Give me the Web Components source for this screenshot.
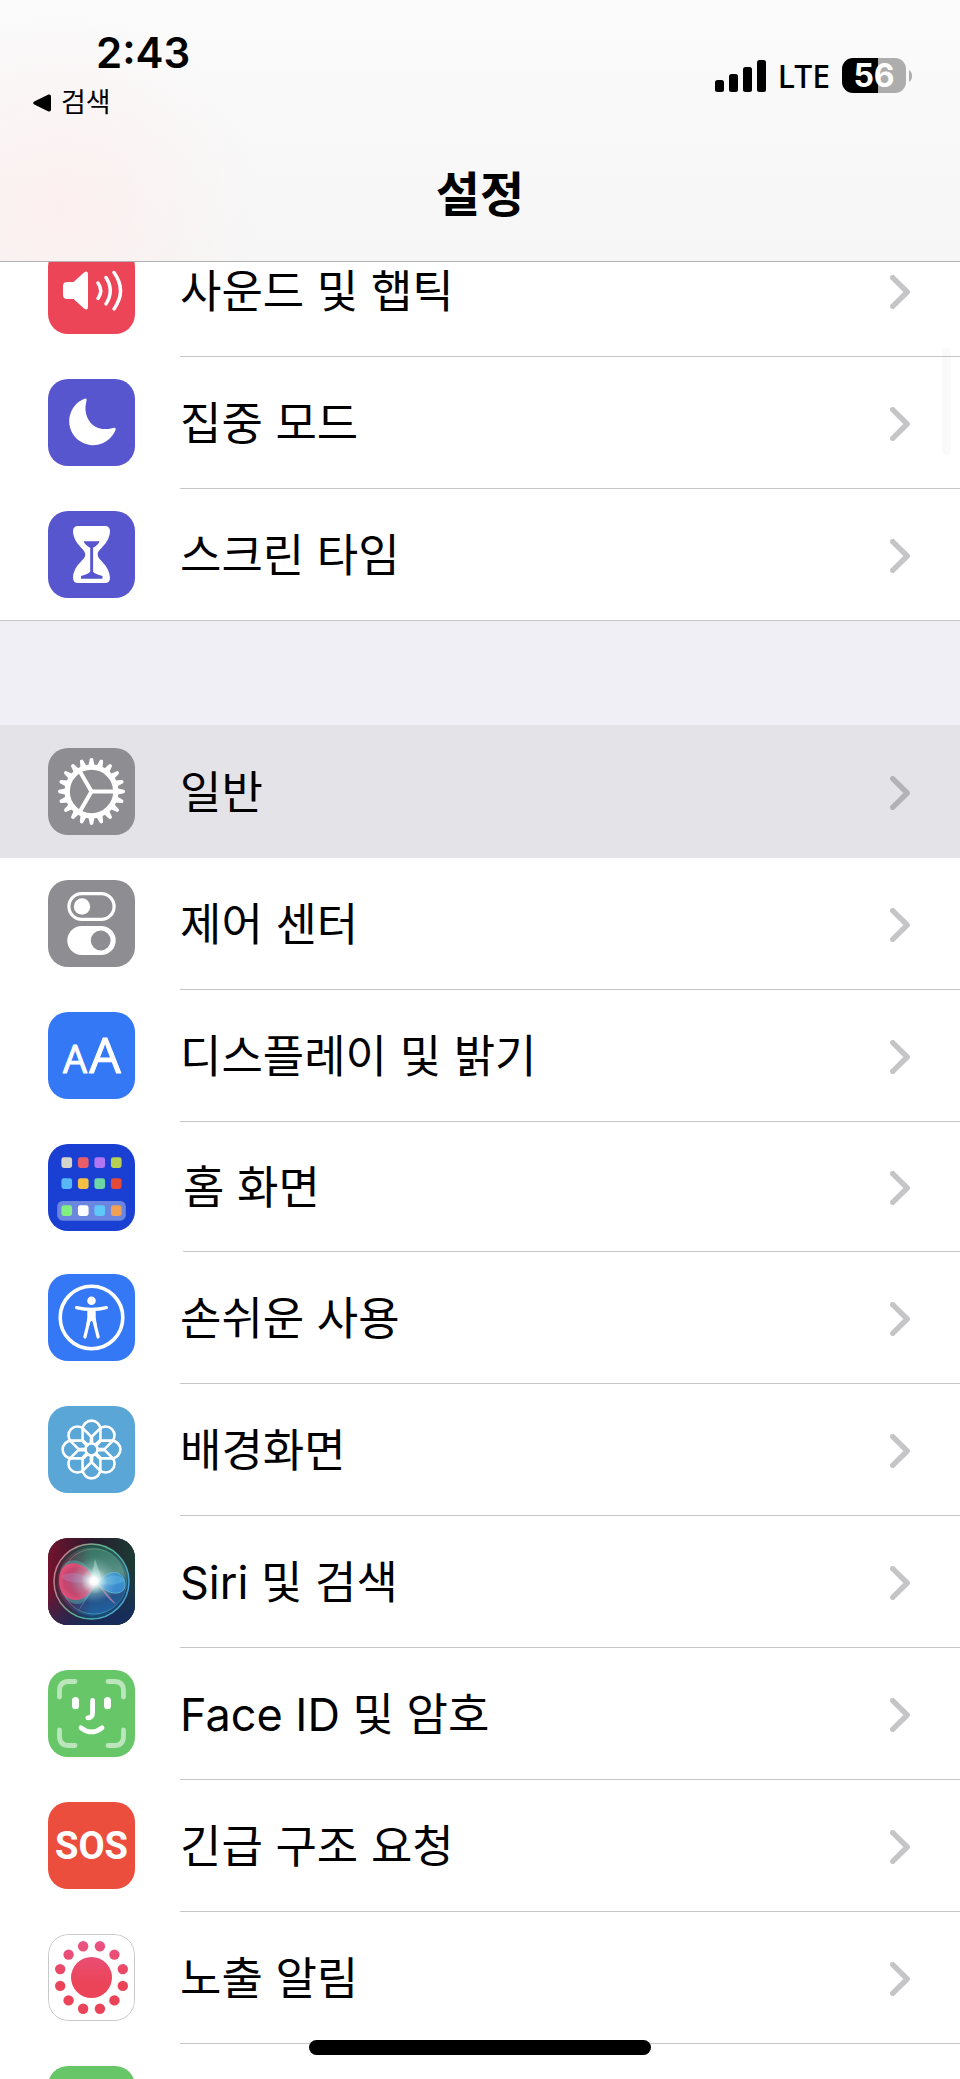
<!DOCTYPE html>
<html lang="ko">
<head>
<meta charset="utf-8">
<meta name="viewport" content="width=device-width, initial-scale=1">
<title>설정</title>
<style>
	body {
		margin: 0;
		color: #000;
		background: #fff;
		font-family: Inter, "Noto Sans CJK KR", sans-serif;
	}
</style>
</head>
<body>

<settings-app>
	<status-bar slot="header" time="2:43" network="LTE" battery="56">검색</status-bar>
	<title-bar slot="header">설정</title-bar>

	<settings-group>
		<settings-row icon="sound">사운드 및 햅틱</settings-row>
		<settings-row icon="moon">집중 모드</settings-row>
		<settings-row icon="hourglass">스크린 타임</settings-row>
	</settings-group>

	<settings-group>
		<settings-row icon="gear" active>일반</settings-row>
		<settings-row icon="toggles">제어 센터</settings-row>
		<settings-row icon="display">디스플레이 및 밝기</settings-row>
		<settings-row icon="home" compact>홈 화면</settings-row>
		<settings-row icon="accessibility">손쉬운 사용</settings-row>
		<settings-row icon="wallpaper">배경화면</settings-row>
		<settings-row icon="siri">Siri 및 검색</settings-row>
		<settings-row icon="face">Face ID 및 암호</settings-row>
		<settings-row icon="sos">긴급 구조 요청</settings-row>
		<settings-row icon="exposure">노출 알림</settings-row>
		<settings-row icon="battery"></settings-row>
	</settings-group>
</settings-app>

<script>
// n copies of a shape, turned around the middle of the icon
const spin = (n, shape) =>
	Array.from({ length: n }, (_, i) =>
		`<g transform="rotate(${(i * 360) / n} 43.5 43.5)">${shape}</g>`
	).join("");

const tiles = (y, colors) =>
	colors
		.map((c, i) => `<rect x="${13.4 + i * 16.5}" y="${y}" width="10.7" height="10.7" rx="2.4" fill="${c}"/>`)
		.join("");

const dots = () =>
	Array.from({ length: 12 }, (_, i) => {
		const a = ((i * 30 + 15) * Math.PI) / 180;
		const x = (43.5 + Math.cos(a) * 32.4).toFixed(2);
		const y = (43.5 + Math.sin(a) * 32.4).toFixed(2);
		return `<circle cx="${x}" cy="${y}" r="5.2"/>`;
	}).join("");

const ICONS = {
	sound: {
		color: "#ec4558",
		art: `
			<path fill="#fff" d="M19 35h6.5L36 25.5q4-2.5 4 2v32q0 4.5-4 2L25.5 52H19q-4 0-4-4v-9q0-4 4-4z"/>
			<g fill="none" stroke="#fff" stroke-width="3.5" stroke-linecap="round">
				<path d="M50 36q5.5 7.7 0 15.4"/>
				<path d="M58 30.5q8.5 13.2 0 26.4"/>
				<path d="M66 25.5q13 18.2 0 36.4"/>
			</g>`,
	},
	moon: {
		color: "#5856ce",
		art: `<path fill="#fff" d="M36.5 19.8Q39.3 18.8 38.5 22C34 38 45 54 64 49.2Q69 47.8 67.3 51.5A24 24 0 1 1 36.5 19.8z"/>`,
	},
	hourglass: {
		color: "#5856ce",
		art: `
			<path fill="#fff" d="M30 15h27q5 0 5 5.5C61 34 49.7 37.5 49.7 43.5S61 53 62 66.5q0 5.5-5 5.5H30q-5 0-5-5.5C26 53 37.3 49.5 37.3 43.5S26 34 25 20.5Q25 15 30 15z"/>
			<path fill="#5856ce" d="M35.7 30.2h15.8q-.7 3.3-6.4 6.5v24q2 2.3 9.4 4.3v2.7H33V65q7.2-2 9.2-4.3v-24q-5.8-3.2-6.5-6.5z"/>`,
	},
	gear: {
		color: "#8e8d92",
		art: `
			<g fill="#fff">${spin(20, `<path d="M69 40.3l6.8 1.5q1.2.3 1.2 1.7t-1.2 1.7L69 46.7z"/>`)}</g>
			<circle cx="43.5" cy="43.5" r="24.3" fill="none" stroke="#fff" stroke-width="5.3"/>
			<g fill="none" stroke="#fff" stroke-width="4">${spin(3, `<path d="M43.5 43.5H67"/>`)}</g>`,
	},
	toggles: {
		color: "#8e8d92",
		art: `
			<rect x="20.9" y="13.6" width="45.2" height="25.8" rx="12.9" fill="none" stroke="#fff" stroke-width="3.2"/>
			<circle cx="34" cy="26.5" r="8.2" fill="#fff"/>
			<rect x="19.3" y="46" width="48.4" height="29" rx="14.5" fill="#fff"/>
			<circle cx="52.7" cy="60.5" r="9.9" fill="#8e8d92"/>`,
	},
	display: {
		color: "#3478f6",
		art: `
			<g fill="#fff" text-anchor="middle" font-family="'Open Sans', sans-serif" font-weight="500" stroke="#fff" stroke-linejoin="round">
				<text x="27" y="61" font-size="38">A</text>
				<text x="57" y="61" font-size="50">A</text>
			</g>`,
	},
	home: {
		color: "#1a3fd3",
		art: `
			<rect x="9.2" y="57" width="68.6" height="19.7" rx="5.5" fill="#6a86e0"/>
			${tiles(13.3, ["#d5d4cb", "#ea5c68", "#b176f4", "#b7d052"])}
			${tiles(34.3, ["#58b8f5", "#f5c044", "#6dd6a6", "#e34a38"])}
			${tiles(61.3, ["#83ef80", "#ffffff", "#60c8f8", "#f0a054"])}`,
	},
	accessibility: {
		color: "#3478f6",
		art: `
			<circle cx="43.5" cy="43.5" r="31.3" fill="none" stroke="#fff" stroke-width="3.6"/>
			<circle cx="43.5" cy="26.7" r="4.3" fill="#fff"/>
			<g fill="none" stroke="#fff" stroke-width="3.2" stroke-linecap="round" stroke-linejoin="round">
				<path d="M28.6 33.6Q36 35.4 43.5 35.4T58.4 33.6"/>
				<path d="M40.8 47L36.9 63M46.2 47L50.1 63"/>
			</g>
			<path fill="#fff" d="M39.3 35h8.4v8l1 8-2.7 1-1.5-4.5q-1-1.5-2 0L41 52l-2.7-1 1-8z"/>`,
	},
	wallpaper: {
		color: "#5aa6d6",
		art: `
			<g fill="none" stroke="#fff" stroke-width="2.6" stroke-linejoin="round">
				${spin(8, `<path d="M34.6 23.5a8.9 8.9 0 0 1 17.8 0V34l-7.5 7h-2.8l-7.5-7z"/>`)}
			</g>
			<circle cx="43.5" cy="43.5" r="6" fill="#5aa6d6" stroke="#fff" stroke-width="2.6"/>`,
	},
	siri: {
		color: "#1b2f38",
		art: `
			<defs>
				<linearGradient id="back">
					<stop offset="0" stop-color="#74122e"/>
					<stop offset=".5" stop-color="#2b1a2c"/>
					<stop offset="1" stop-color="#1b3c34"/>
				</linearGradient>
				<linearGradient id="floor" x1=".2" y1="0" x2=".5" y2="1">
					<stop offset=".5" stop-color="#17345c" stop-opacity="0"/>
					<stop offset="1" stop-color="#152c60" stop-opacity=".85"/>
				</linearGradient>
				<linearGradient id="orb" x1=".4" y1="0" x2=".6" y2="1">
					<stop offset="0" stop-color="#2f6f5c"/>
					<stop offset=".45" stop-color="#5a9088"/>
					<stop offset=".75" stop-color="#24548c"/>
					<stop offset="1" stop-color="#1f68a8"/>
				</linearGradient>
				<linearGradient id="shade">
					<stop offset="0" stop-color="#7a1234" stop-opacity=".9"/>
					<stop offset=".5" stop-color="#4a1030" stop-opacity="0"/>
				</linearGradient>
				<linearGradient id="rim" x1="0" y1=".3" x2="1" y2=".7">
					<stop offset="0" stop-color="#d0788c"/>
					<stop offset=".5" stop-color="#55b890"/>
					<stop offset="1" stop-color="#4ba0dc"/>
				</linearGradient>
				<radialGradient id="pink">
					<stop offset="0" stop-color="#b05480"/>
					<stop offset=".7" stop-color="#d0406c"/>
					<stop offset="1" stop-color="#f04a78"/>
				</radialGradient>
				<radialGradient id="glow">
					<stop offset="0" stop-color="#fff"/>
					<stop offset=".3" stop-color="#fff" stop-opacity=".9"/>
					<stop offset=".6" stop-color="#c8f0ec" stop-opacity=".4"/>
					<stop offset="1" stop-color="#a0e0e0" stop-opacity="0"/>
				</radialGradient>
			</defs>
			<path fill="url(#back)" d="M0 0h87v87H0z"/>
			<path fill="url(#floor)" d="M0 0h87v87H0z"/>
			<circle cx="43.5" cy="43.5" r="37.5" fill="url(#orb)"/>
			<circle cx="43.5" cy="43.5" r="37.5" fill="url(#shade)"/>
			<circle cx="43.5" cy="43.5" r="35.5" fill="none" stroke="#0d2428" stroke-opacity=".4" stroke-width="3"/>
			<circle cx="43.5" cy="43.5" r="37.5" fill="none" stroke="url(#rim)" stroke-width="1.5"/>
			<circle cx="46" cy="43.5" r="32.5" fill="none" stroke="url(#rim)" stroke-opacity=".5"/>
			<path fill="#58b8b8" fill-opacity=".45" d="M48 43C38 17 16 17 12 35S20 70 34 65Q44 58 48 43z"/>
			<path fill="url(#pink)" fill-opacity=".9" d="M48 44C38 20 14 20 11.5 38S20 64 32 61.5Q43 58 48 44z"/>
			<path fill="#b090c8" fill-opacity=".35" d="M47 43Q26 30 13 38Q18 48 47 43z"/>
			<path fill="#3c92da" fill-opacity=".85" stroke="#62bed8" stroke-width=".8" d="M47 44C56 40 59 34 67 34.5S79 46 76 51 62 59 47 44z"/>
			<path fill="#58b0e0" fill-opacity=".6" d="M47 44Q63 50 77 43Q72 36 62 38z"/>
			<path fill="#8cb8e8" fill-opacity=".35" d="M47 44L30 73Q37 66 47 44z"/>
			<path fill="#e090b4" fill-opacity=".6" d="M48 43L68 66Q61 64 48 43z"/>
			<path fill="#c0f0e0" fill-opacity=".45" d="M43 42L47 21L54 42z"/>
			<circle cx="46" cy="42.5" r="23" fill="url(#glow)" fill-opacity=".6"/>
			<circle cx="46" cy="43" r="13" fill="url(#glow)"/>`,
	},
	face: {
		color: "#66c668",
		art: `
			<g fill="none" stroke-width="4.8" stroke-linecap="round">
				<g stroke="#bbe6bb">${spin(4, `<path d="M11.5 27v-6.5q0-9 9-9H27"/>`)}</g>
				<path stroke="#fff" d="M44.6 30.5v12q0 5.3-4.8 5.3"/>
				<path stroke="#fff" d="M33 57.8q10.5 8.2 21 0"/>
			</g>
			<rect x="24" y="27" width="7" height="12.3" rx="3.5" fill="#fff"/>
			<rect x="56" y="27" width="7" height="12.3" rx="3.5" fill="#fff"/>`,
	},
	sos: {
		color: "#eb4e3d",
		art: `<text x="43.5" y="57" fill="#fff" text-anchor="middle" font-family="Roboto, sans-serif" font-weight="700" font-size="38">SOS</text>`,
	},
	exposure: {
		color: "#fff",
		art: `
			<linearGradient id="warm" gradientUnits="userSpaceOnUse" x1="0" y1="6" x2="0" y2="50">
				<stop offset="0" stop-color="#e95485"/>
				<stop offset="1" stop-color="#eb4458"/>
			</linearGradient>
			<rect x=".5" y=".5" width="86" height="86" rx="20" fill="none" stroke="#c8c8ca"/>
			<g fill="url(#warm)"><circle cx="43.5" cy="43.5" r="20.5"/>${dots()}</g>`,
	},
	battery: { color: "#66c668", art: "" },
};

class SettingsApp extends HTMLElement {
	constructor() {
		super();
		this.attachShadow({ mode: "open" });
		this.shadowRoot.innerHTML = `
			<style>
				:host {
					display: flex;
					flex-direction: column;
					position: relative;
					height: 100vh;
					overflow: hidden;
				}
				header {
					z-index: 1;
					flex: none;
					border-bottom: 1px solid #b2b2b3;
					background:
						radial-gradient( circle at 60px 210px, rgba( 253,238,237,0.8 ), rgba( 253,238,237,0 ) 200px ),
						linear-gradient( #fbfbfc, #f6f6f6 );
				}
				/* The list is scrolled a little under the header */
				main {
					display: flex;
					flex-direction: column;
					gap: 104px;
					flex: 1;
					min-height: 0;
					margin-top: -37px;
					overflow: hidden;
					background: #f0eff5;
				}
				.scrollbar,
				.home-indicator {
					position: absolute;
				}
				.scrollbar {
					top: 347px;
					right: 9px;
					width: 9px;
					height: 108px;
					border-radius: 5px;
					background: rgba( 0,0,0,0.02 );
				}
				.home-indicator {
					bottom: 24px;
					left: 50%;
					width: 342px;
					height: 15px;
					border-radius: 8px;
					background: #000;
					transform: translateX( -50% );
				}
			</style>
			<header><slot name="header"></slot></header>
			<main><slot></slot></main>
			<div class="scrollbar"></div>
			<div class="home-indicator"></div>
		`;
	}
}

class StatusBar extends HTMLElement {
	constructor() {
		super();
		this.attachShadow({ mode: "open" });
	}

	connectedCallback() {
		const level = this.getAttribute("battery");
		this.shadowRoot.innerHTML = `
			<style>
				:host {
					display: flex;
					justify-content: space-between;
					align-items: flex-start;
				}
				.left {
					display: flex;
					flex-direction: column;
					gap: 8px;
					padding-top: 32px;
				}
				time {
					padding-left: 96px;
					font-size: 42px;
					font-weight: 600;
					line-height: 42px;
				}
				a {
					display: flex;
					align-items: center;
					gap: 9px;
					padding-left: 33px;
					color: inherit;
					font-size: 27px;
					line-height: 42px;
					text-decoration: none;
				}
				svg {
					display: block;
				}
				.right {
					display: flex;
					align-items: center;
					gap: 12px;
					padding: 58px 48px 0 0;
					height: 35px;
				}
				.network {
					font: 500 32px/35px "Noto Sans", sans-serif;
				}
				.battery {
					display: flex;
					align-items: center;
					gap: 3px;
				}
				.level {
					width: 64px;
					border-radius: 11px;
					color: #fff;
					background: linear-gradient( 90deg, #000 ${level}%, #adadad 0 );
					font-size: 32px;
					font-weight: 700;
					line-height: 35px;
					text-align: center;
				}
			</style>
			<div class="left">
				<time>${this.getAttribute("time")}</time>
				<a href="#search">
					<svg width="19" height="18" viewBox="0 0 19 18"><path d="M1.2 7.4L15.5.5Q18 0 18 2.5v13q0 2.5-2.5 2L1.2 10.6Q-.8 9 1.2 7.4z"/></svg>
					<slot></slot>
				</a>
			</div>
			<div class="right">
				<svg width="51" height="32" viewBox="0 0 51 32">
					<rect y="20" width="9" height="12" rx="2.5"/>
					<rect x="14" y="14" width="9" height="18" rx="2.5"/>
					<rect x="28" y="7" width="9" height="25" rx="2.5"/>
					<rect x="42" width="9" height="32" rx="2.5"/>
				</svg>
				<span class="network">${this.getAttribute("network")}</span>
				<span class="battery">
					<span class="level">${level}</span>
					<svg width="3" height="12" viewBox="0 0 3 12"><path fill="#adadad" d="M0 0q3 2 3 6t-3 6z"/></svg>
				</span>
			</div>
		`;
	}
}

class TitleBar extends HTMLElement {
	constructor() {
		super();
		this.attachShadow({ mode: "open" });
		this.shadowRoot.innerHTML = `
			<style>
				:host {
					display: block;
					padding: 41px 48px 36px;
				}
				h1 {
					margin: 0;
					font-size: 48px;
					font-weight: 700;
					line-height: 60px;
					text-align: center;
				}
			</style>
			<h1><slot></slot></h1>
		`;
	}
}

class SettingsGroup extends HTMLElement {
	constructor() {
		super();
		this.attachShadow({ mode: "open" });
		this.shadowRoot.innerHTML = `
			<style>
				:host {
					display: block;
					flex: none;
					background: #fff;
				}
				:host(:last-of-type) {
					border-top: 1px solid #e4e3e8;
				}
				::slotted(:last-of-type) {
					--divider-inset: 0px;
				}
			</style>
			<slot></slot>
		`;
	}
}

class SettingsIcon extends HTMLElement {
	constructor() {
		super();
		this.attachShadow({ mode: "open" });
	}

	connectedCallback() {
		const { color, art } = ICONS[this.getAttribute("name")];
		this.shadowRoot.innerHTML = `
			<style>
				:host {
					display: block;
					flex: none;
					width: 87px;
					height: 87px;
					overflow: hidden;
					border-radius: 20px;
					background: ${color};
				}
				svg {
					display: block;
				}
			</style>
			<svg width="87" height="87" viewBox="0 0 87 87" aria-hidden="true">${art}</svg>
		`;
	}
}

class SettingsRow extends HTMLElement {
	constructor() {
		super();
		this.attachShadow({ mode: "open" });
	}

	connectedCallback() {
		const icon = this.getAttribute("icon");
		this.shadowRoot.innerHTML = `
			<style>
				:host {
					display: block;
					--label-inset: 180px;
				}
				:host([compact]) {
					--label-inset: 183px;
				}
				a {
					display: grid;
					grid-template-columns: calc( var( --label-inset ) - 48px ) 1fr 20px;
					align-content: start;
					align-items: start;
					box-sizing: border-box;
					height: 132px;
					padding: 22px 50px 0 48px;
					background: linear-gradient( #c6c6c8, #c6c6c8 ) right bottom / calc( 100% - var( --divider-inset, var( --label-inset ) ) ) 1px no-repeat;
					color: inherit;
					font-size: 45px;
					line-height: 90px;
					text-decoration: none;
				}
				:host([compact]) a {
					height: 130px;
					line-height: 88px;
				}
				:host([active]) a {
					background: #e4e3e8;
				}
				.chevron {
					align-self: center;
					fill: none;
					stroke: #c5c5c7;
					stroke-width: 5.4;
					stroke-linecap: round;
					stroke-linejoin: round;
				}
				:host([active]) .chevron {
					stroke: #b3b2b7;
				}
			</style>
			<a href="#${icon}">
				<settings-icon name="${icon}"></settings-icon>
				<span><slot></slot></span>
				<svg class="chevron" width="20" height="34" viewBox="0 0 20 34"><path d="M2.7 2.7L17.2 17L2.7 31.3"/></svg>
			</a>
		`;
	}
}

customElements.define("settings-app", SettingsApp);
customElements.define("status-bar", StatusBar);
customElements.define("title-bar", TitleBar);
customElements.define("settings-group", SettingsGroup);
customElements.define("settings-icon", SettingsIcon);
customElements.define("settings-row", SettingsRow);
</script>
</body>
</html>
